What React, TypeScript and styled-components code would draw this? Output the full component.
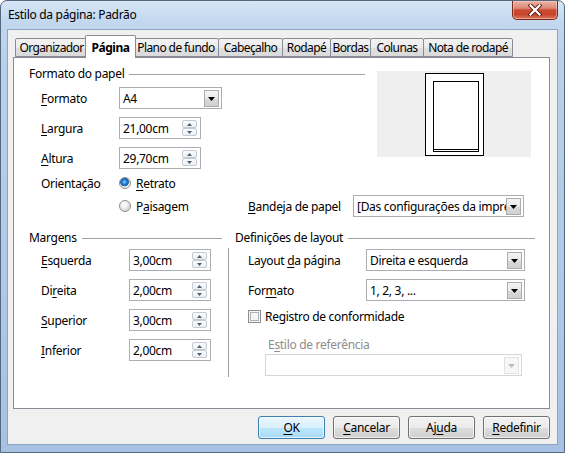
import React from "react";
import styled, { createGlobalStyle } from "styled-components";

const GlobalStyle = createGlobalStyle`
  html, body { margin: 0; padding: 0; background: #ffffff; }
  body {
    font-family: "Noto Sans", "Open Sans", sans-serif;
    font-size: 12px;
    letter-spacing: -0.3px;
    color: #000000;
  }
  * { box-sizing: border-box; }
`;

const Window = styled.div`
  width: 565px;
  height: 453px;
  display: flex;
  flex-direction: column;
  border: 1px solid #54687f;
  border-radius: 7px 7px 0 0;
  padding: 0 6px 7px 6px;
  background: linear-gradient(180deg, #d7e6f6 0px, #c3d8ef 20px, #b9d0ea 60px, #aec8e6 300px, #a6c1e2 100%);
`;

const TitleBar = styled.div`
  height: 28px;
  display: flex;
  justify-content: space-between;
  align-items: flex-start;
`;

const Title = styled.div`
  align-self: center;
  padding-left: 1px;
  line-height: 16px;
  color: #000;
`;

const CloseButton = styled.div`
  width: 46px;
  height: 19px;
  border: 1px solid #7c2a1d;
  border-top: none;
  border-radius: 0 0 5px 5px;
  background: linear-gradient(180deg, #eab3a6 0%, #dc8a76 40%, #c94a31 50%, #c8452b 75%, #dc7a5c 100%);
  box-shadow: inset 0 0 0 1px rgba(255, 220, 210, 0.45);
  display: flex;
  align-items: center;
  justify-content: center;
`;

const Client = styled.div`
  flex: 1;
  display: flex;
  flex-direction: column;
  border: 1px solid #8ea5c1;
  background: #f0f0f0;
  padding: 5px 7px 5px 5px;
`;

const TabStrip = styled.div`
  height: 22px;
  display: flex;
  align-items: flex-end;
  padding-left: 2px;
`;

const Tab = styled.div<{ $w: number; $active?: boolean; $first?: boolean }>`
  position: relative;
  width: ${(p) => p.$w + (p.$active ? 5 : 1)}px;
  height: ${(p) => (p.$active ? 23 : 19)}px;
  margin-left: ${(p) => (p.$active ? -3 : p.$first ? 0 : -1)}px;
  margin-right: ${(p) => (p.$active ? -2 : 0)}px;
  margin-bottom: ${(p) => (p.$active ? -1 : 0)}px;
  padding-top: ${(p) => (p.$active ? 3 : 0)}px;
  border: 1px solid #898c95;
  border-bottom: ${(p) => (p.$active ? "none" : "1px solid #898c95")};
  border-radius: 2px 2px 0 0;
  background: ${(p) =>
    p.$active ? "#ffffff" : "linear-gradient(180deg, #f3f3f3 0%, #ebebeb 50%, #e0e0e0 51%, #dadada 100%)"};
  z-index: ${(p) => (p.$active ? 2 : 1)};
  font-weight: ${(p) => (p.$active ? 700 : 400)};
  letter-spacing: ${(p) => (p.$active ? -0.5 : -0.6)}px;
  line-height: 17px;
  text-align: center;
  white-space: nowrap;
`;

const Panel = styled.div`
  height: 352px;
  border: 1px solid #898c95;
  background: #ffffff;
  padding: 8px 14px 0 15px;
  display: flex;
  flex-direction: column;
`;

const TopArea = styled.div`
  display: flex;
  align-items: flex-start;
  gap: 12px;
`;

const Column = styled.div`
  flex: 1;
  display: flex;
  flex-direction: column;
`;

const SectionHeader = styled.div<{ $indent?: number }>`
  display: flex;
  align-items: center;
  gap: 5px;
  height: 16px;
  line-height: 16px;
  padding-left: ${(p) => p.$indent ?? 0}px;
  white-space: nowrap;
  &::after {
    content: "";
    flex: 1;
    height: 1px;
    margin-top: 1px;
    background: #a0a0a0;
  }
`;

const Stack = styled.div<{ $gap: number; $top?: number }>`
  display: flex;
  flex-direction: column;
  gap: ${(p) => p.$gap}px;
  margin-top: ${(p) => p.$top ?? 0}px;
`;

const Row = styled.div<{ $indent?: number; $top?: number; $h?: number }>`
  display: flex;
  align-items: center;
  height: ${(p) => p.$h ?? 22}px;
  padding-left: ${(p) => p.$indent ?? 0}px;
  margin-top: ${(p) => p.$top ?? 0}px;
`;

const Label = styled.div<{ $w?: number; $muted?: boolean; $pad?: number }>`
  width: ${(p) => (p.$w ? `${p.$w}px` : "auto")};
  flex-shrink: 0;
  padding-left: ${(p) => p.$pad ?? 0}px;
  white-space: nowrap;
  color: ${(p) => (p.$muted ? "#8d8d8d" : "#000")};
`;

const Acc = styled.span`
  text-decoration: underline;
  text-underline-offset: 2px;
`;

const Preview = styled.div`
  width: 154px;
  height: 86px;
  margin-top: 5px;
  margin-right: 4px;
  background: #efefef;
`;

const ComboBox = styled.div<{ $w: number; $disabled?: boolean }>`
  width: ${(p) => p.$w}px;
  height: 22px;
  flex-shrink: 0;
  border: 1px solid ${(p) => (p.$disabled ? "#d5d5d5" : "#abadb3")};
  background: #ffffff;
  display: flex;
  align-items: flex-start;
  padding: 2px 2px 0 3px;
`;

const ComboText = styled.div`
  flex: 1;
  min-width: 0;
  overflow: hidden;
  white-space: nowrap;
  line-height: 17px;
`;

const ComboArrow = styled.div<{ $disabled?: boolean }>`
  width: 15px;
  height: 17px;
  flex-shrink: 0;
  border: 1px solid ${(p) => (p.$disabled ? "#e2e2e2" : "#acacac")};
  background: ${(p) =>
    p.$disabled ? "#f7f7f7" : "linear-gradient(180deg, #f4f4f4 0%, #e9e9e9 50%, #dadada 51%, #d0d0d0 100%)"};
  display: flex;
  align-items: center;
  justify-content: center;
`;

const SpinBox = styled.div<{ $w: number }>`
  width: ${(p) => p.$w}px;
  height: 22px;
  flex-shrink: 0;
  border: 1px solid #abadb3;
  background: #ffffff;
  display: flex;
  align-items: center;
  padding: 0 3px 0 3px;
`;

const SpinText = styled.div`
  flex: 1;
  white-space: nowrap;
  line-height: 17px;
`;

const SpinButtons = styled.div`
  width: 15px;
  display: flex;
  flex-direction: column;
`;

const SpinButton = styled.div`
  height: 8px;
  border: 1px solid #c3cad4;
  border-radius: 2px;
  background: linear-gradient(180deg, #fbfbfb 0%, #eceff3 100%);
  display: flex;
  align-items: center;
  justify-content: center;
`;

const RadioGroup = styled.div<{ $w: number }>`
  width: ${(p) => p.$w}px;
  display: flex;
  align-items: center;
  gap: 5px;
  flex-shrink: 0;
`;

const RadioDot = styled.span<{ $checked?: boolean }>`
  width: 12px;
  height: 12px;
  border-radius: 50%;
  border: 1px solid #8e8f8f;
  background: ${(p) =>
    p.$checked
      ? "radial-gradient(circle at 45% 40%, #9fd5ff 0px, #2c8ae0 2px, #1459a6 4px, #e6e6e6 4.6px, #f6f6f6 100%)"
      : "radial-gradient(circle at 40% 35%, #ffffff 0px, #f1f1f1 3px, #d9d9d9 6px)"};
  flex-shrink: 0;
`;

const CheckBox = styled.span`
  width: 13px;
  height: 13px;
  border: 1px solid #8e8f8f;
  background: #f4f4f4;
  box-shadow: inset 0 0 0 1px #f4f4f4, inset 0 0 0 2px #aeb3b9;
  flex-shrink: 0;
  margin-right: 4px;
`;

const BottomArea = styled.div`
  display: grid;
  grid-template-columns: 193px 1fr;
  column-gap: 6px;
  margin-top: 13px;
`;

const LayoutBody = styled.div`
  margin-top: 2px;
  border-left: 1px solid #a0a0a0;
  padding: 1px 0 1px 19px;
  display: flex;
  flex-direction: column;
`;

const SubBlock = styled.div`
  padding-left: 17px;
  display: flex;
  flex-direction: column;
`;

const ButtonBar = styled.div`
  margin-top: 7px;
  display: flex;
  justify-content: flex-end;
  gap: 8px;
`;

const PushButton = styled.div<{ $default?: boolean }>`
  width: 67px;
  height: 23px;
  border: 1px solid ${(p) => (p.$default ? "#3c7fb1" : "#707070")};
  border-radius: 3px;
  background: ${(p) =>
    p.$default
      ? "linear-gradient(180deg, #eaf6fd 0%, #d9f0fc 50%, #bee6fd 51%, #a7d9f5 100%)"
      : "linear-gradient(180deg, #f2f2f2 0%, #ebebeb 50%, #dddddd 51%, #cfcfcf 100%)"};
  box-shadow: inset 0 0 0 1px rgba(255, 255, 255, 0.65);
  display: flex;
  align-items: center;
  justify-content: center;
  line-height: 16px;
`;

const DownTriangle = ({ color = "#000" }: { color?: string }) => (
  <svg width="7" height="4" viewBox="0 0 7 4">
    <path d="M0 0 H7 L3.5 4 Z" fill={color} />
  </svg>
);

const Combo: React.FC<{ w: number; value?: string; disabled?: boolean }> = ({ w, value, disabled }) => (
  <ComboBox $w={w} $disabled={disabled}>
    <ComboText>{value}</ComboText>
    <ComboArrow $disabled={disabled}>
      <DownTriangle color={disabled ? "#bdbdbd" : "#000"} />
    </ComboArrow>
  </ComboBox>
);

const Spin: React.FC<{ w: number; value: string }> = ({ w, value }) => (
  <SpinBox $w={w}>
    <SpinText>{value}</SpinText>
    <SpinButtons>
      <SpinButton>
        <svg width="5" height="3" viewBox="0 0 5 3">
          <path d="M0 3 H5 L2.5 0 Z" fill="#4d5d72" />
        </svg>
      </SpinButton>
      <SpinButton>
        <svg width="5" height="3" viewBox="0 0 5 3">
          <path d="M0 0 H5 L2.5 3 Z" fill="#4d5d72" />
        </svg>
      </SpinButton>
    </SpinButtons>
  </SpinBox>
);

const PagePreview = () => (
  <svg width="154" height="86" viewBox="0 0 154 86" shapeRendering="crispEdges">
    <rect x="48.5" y="2.5" width="58" height="82" fill="#ffffff" stroke="#000" />
    <rect x="56.5" y="10.5" width="45" height="70" fill="#ffffff" stroke="#000" />
    <line x1="56.5" y1="78.5" x2="101.5" y2="78.5" stroke="#000" />
  </svg>
);

const tabs = [
  { label: "Organizador", w: 72 },
  { label: "Página", w: 46, active: true },
  { label: "Plano de fundo", w: 85 },
  { label: "Cabeçalho", w: 64 },
  { label: "Rodapé", w: 48 },
  { label: "Bordas", w: 40 },
  { label: "Colunas", w: 53 },
  { label: "Nota de rodapé", w: 89 },
];

export default function App() {
  return (
    <>
      <GlobalStyle />
      <Window>
        <TitleBar>
          <Title>Estilo da página: Padrão</Title>
          <CloseButton>
            <svg width="14" height="12" viewBox="0 0 14 12">
              <path d="M2.5 1.5 L11.5 10.5 M11.5 1.5 L2.5 10.5" stroke="#5a1a10" strokeWidth="4" strokeLinecap="square" />
              <path d="M2.5 1.5 L11.5 10.5 M11.5 1.5 L2.5 10.5" stroke="#ffffff" strokeWidth="2.2" strokeLinecap="square" />
            </svg>
          </CloseButton>
        </TitleBar>
        <Client>
          <TabStrip>
            {tabs.map((t, i) => (
              <Tab key={t.label} $w={t.w} $active={t.active} $first={i === 0}>
                {t.label}
              </Tab>
            ))}
          </TabStrip>
          <Panel>
            <TopArea>
              <Column>
                <SectionHeader>Formato do papel</SectionHeader>
                <Stack $gap={8} $top={5}>
                  <Row $indent={12}>
                    <Label $w={78}>
                      <Acc>F</Acc>ormato
                    </Label>
                    <Combo w={103} value="A4" />
                  </Row>
                  <Row $indent={12}>
                    <Label $w={78}>
                      <Acc>L</Acc>argura
                    </Label>
                    <Spin w={82} value="21,00cm" />
                  </Row>
                  <Row $indent={12}>
                    <Label $w={78}>
                      <Acc>A</Acc>ltura
                    </Label>
                    <Spin w={82} value="29,70cm" />
                  </Row>
                </Stack>
                <Row $indent={12} $top={6} $h={16}>
                  <Label $w={78}>Orientação</Label>
                  <RadioGroup $w={129}>
                    <RadioDot $checked />
                    <span>
                      <Acc>R</Acc>etrato
                    </span>
                  </RadioGroup>
                </Row>
              </Column>
              <Preview>
                <PagePreview />
              </Preview>
            </TopArea>
            <Row $indent={12} $top={4}>
              <Label $w={78} />
              <RadioGroup $w={129}>
                <RadioDot />
                <span>
                  P<Acc>a</Acc>isagem
                </span>
              </RadioGroup>
              <Label $w={105}>
                <Acc>B</Acc>andeja de papel
              </Label>
              <Combo w={171} value="[Das configurações da impre" />
            </Row>
            <BottomArea>
              <Column>
                <SectionHeader>Margens</SectionHeader>
                <Stack $gap={8} $top={3}>
                  <Row $indent={12}>
                    <Label $w={88}>
                      <Acc>E</Acc>squerda
                    </Label>
                    <Spin w={82} value="3,00cm" />
                  </Row>
                  <Row $indent={12}>
                    <Label $w={88}>
                      Di<Acc>r</Acc>eita
                    </Label>
                    <Spin w={82} value="2,00cm" />
                  </Row>
                  <Row $indent={12}>
                    <Label $w={88}>
                      <Acc>S</Acc>uperior
                    </Label>
                    <Spin w={82} value="3,00cm" />
                  </Row>
                  <Row $indent={12}>
                    <Label $w={88}>
                      <Acc>I</Acc>nferior
                    </Label>
                    <Spin w={82} value="2,00cm" />
                  </Row>
                </Stack>
              </Column>
              <Column>
                <SectionHeader $indent={7}>Definições de layout</SectionHeader>
                <LayoutBody>
                  <Stack $gap={8}>
                    <Row>
                      <Label $w={118}>
                        Layout <Acc>d</Acc>a página
                      </Label>
                      <Combo w={159} value="Direita e esquerda" />
                    </Row>
                    <Row>
                      <Label $w={118}>
                        For<Acc>m</Acc>ato
                      </Label>
                      <Combo w={159} value="1, 2, 3, ..." />
                    </Row>
                    <Row $h={14}>
                      <CheckBox />
                      <Label>
                        Re<Acc>g</Acc>istro de conformidade
                      </Label>
                    </Row>
                  </Stack>
                  <SubBlock>
                    <Row $h={16} $top={13}>
                      <Label $muted $pad={3}>
                        E<Acc>s</Acc>tilo de referência
                      </Label>
                    </Row>
                    <Row $top={2}>
                      <Combo w={257} disabled />
                    </Row>
                  </SubBlock>
                </LayoutBody>
              </Column>
            </BottomArea>
          </Panel>
          <ButtonBar>
            <PushButton $default>
              <span>
                <Acc>O</Acc>K
              </span>
            </PushButton>
            <PushButton>
              <span>
                <Acc>C</Acc>ancelar
              </span>
            </PushButton>
            <PushButton>
              <span>
                Aj<Acc>u</Acc>da
              </span>
            </PushButton>
            <PushButton>
              <span>
                <Acc>R</Acc>edefinir
              </span>
            </PushButton>
          </ButtonBar>
        </Client>
      </Window>
    </>
  );
}
